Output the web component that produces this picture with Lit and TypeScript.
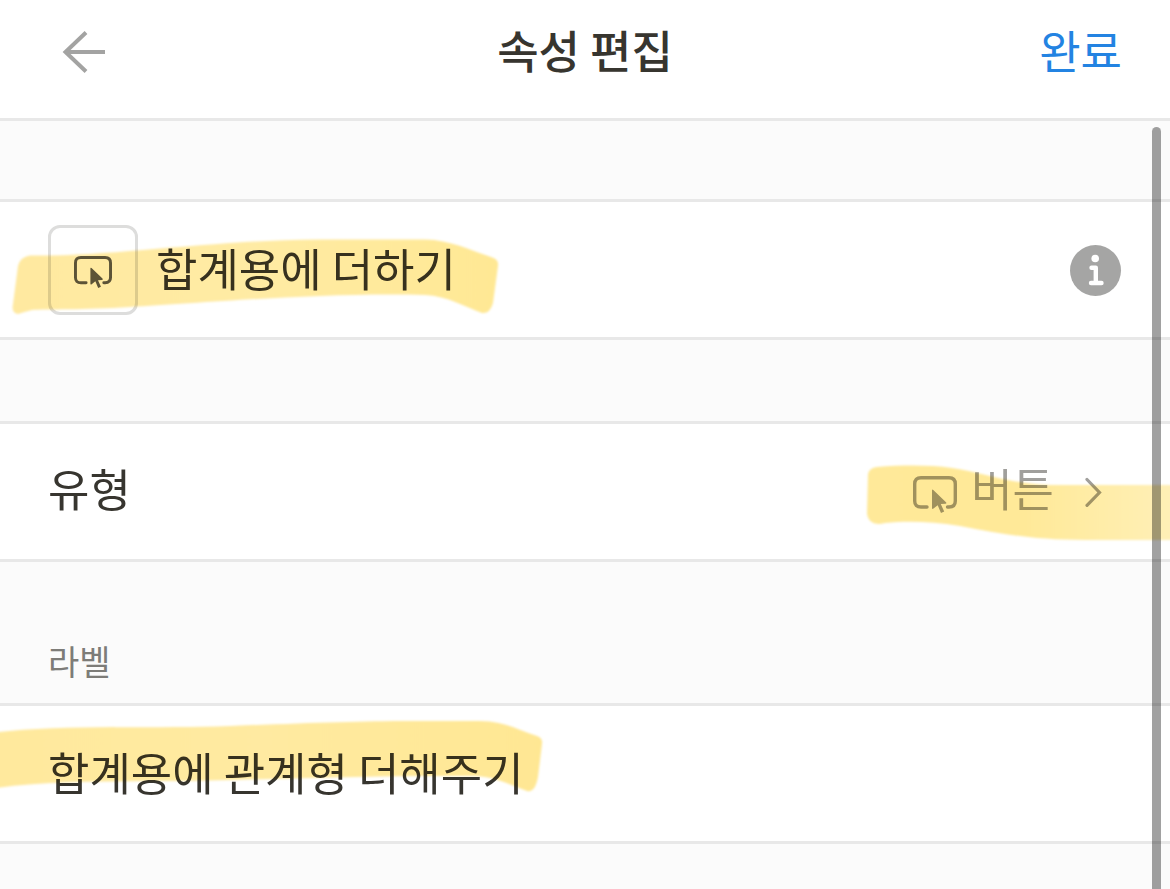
import { LitElement, html, css, svg } from "lit";
import { customElement, property, state } from "lit/decorators.js";

/** Rounded rectangle with a pointer: the icon of the button property type. */
@customElement("button-type-icon")
class ButtonTypeIcon extends LitElement {
  static styles = css`
    :host {
      display: block;
    }
    .glyph {
      display: block;
      width: 100%;
      height: auto;
    }
  `;
  render() {
    return html`<svg class="glyph" viewBox="0 0 44 38" fill="none" aria-hidden="true">
      <path
        d="M14 31H8Q1.700 31 1.700 25V8Q1.700 1.700 8 1.700H36Q42.300 1.700 42.300 8V25Q42.300 31 36 31H34.500"
        stroke="currentColor"
        stroke-width="3.4"
        stroke-linecap="round"
      />
      <path
        d="M19 14.500Q19 12.800 20.300 14L33 26.200Q34 27.600 32.500 27.700L27.800 28L31.200 35.600L28 37L24.700 29.300L20.500 32.600Q19 33.500 19 32Z"
        fill="currentColor"
      />
    </svg>`;
  }
}

type StrokeShape = { box: string; d: string; fade: [string, string, string] };

const strokes: Record<string, StrokeShape> = {
  name: {
    box: "10 235 492 85",
    d: "M18 266Q20 257 30 255.500C110 257 210 240 320 239.500H425C450 240 470 250 491 257Q499 259 498 266L493 303Q490 314 482 313C465 307 448 296 425 295C330 292 200 303 130 307C85 310 45 309 32 310Q24 312 18 314Q11 313 13 304Z",
    fade: ["#ffe9a0", "#ffeba4", "#ffe894"],
  },
  type: {
    box: "864 460 306 85",
    d: "M868 474Q869 468 877 467C905 465 930 465 952 468C985 473 1010 484 1050 485L1180 485V540H1085C1035 540 1000 534 960 526C930 521 905 521 885 523Q869 527 867 514Z",
    fade: ["#ffe999", "#ffe998", "#fff0b8"],
  },
  label: {
    box: "0 715 548 85",
    d: "M-10 733C60 724 160 729 230 726C310 723 360 721 410 721H480C505 721 520 731 537 736Q543 738 542 744L538 777Q535 793 527 791C510 785 497 777 475 776C340 775 220 782 150 781C90 782 40 781 -10 789Z",
    fade: ["#ffe99d", "#ffeaa1", "#ffe793"],
  },
};

/** One highlighter stroke, blended over the row below it. */
@customElement("marker-stroke")
class MarkerStroke extends LitElement {
  static styles = css`
    :host {
      display: block;
    }
    .ink {
      display: block;
      width: 100%;
    }
  `;
  @property() shape = "name";

  render() {
    const { box, d, fade } = strokes[this.shape];
    return html`<svg class="ink" viewBox=${box} aria-hidden="true">
      <defs>
        <linearGradient id="tint">
          ${fade.map((c, i) => svg`<stop offset=${i / 2} stop-color=${c} />`)}
        </linearGradient>
        <filter id="soft" x="-5%" y="-10%" width="110%" height="120%">
          <feGaussianBlur stdDeviation="1.3" />
        </filter>
      </defs>
      <path d=${d} fill="url(#tint)" filter="url(#soft)" />
    </svg>`;
  }
}

@customElement("app-root")
class AppRoot extends LitElement {
  static styles = css`
    :host {
      --text: #37352f;
      --muted: #a09f9c;
      --line: #e8e8e8;
      display: block;
      position: relative;
      box-sizing: border-box;
      min-height: 100vh;
      background: #fbfbfb;
      color: var(--text);
      font-family: "Noto Sans CJK KR", sans-serif;
      font-size: 45px;
      line-height: 64px;
    }
    * {
      box-sizing: border-box;
    }
    button,
    input {
      margin: 0;
      padding: 0;
      border: 0;
      background: none;
      color: inherit;
      font: inherit;
    }
    button {
      cursor: pointer;
    }
    .header {
      display: grid;
      grid-template-columns: 1fr auto 1fr;
      align-items: center;
      padding: 18px 48px 36px;
      border-bottom: 3px solid var(--line);
      background: #fff;
    }
    .title {
      margin: 0;
      font-size: 45px;
      line-height: 64px;
      font-weight: 500;
    }
    .back {
      justify-self: start;
      padding: 4px 0 0 14px;
      color: #a3a3a2;
    }
    .back-icon {
      display: block;
      width: 44px;
      height: 44px;
    }
    .done {
      justify-self: end;
      color: #2383e2;
    }
    .form {
      display: grid;
      gap: 81px;
      padding-top: 78px;
    }
    .row {
      position: relative;
      isolation: isolate;
      display: flex;
      align-items: center;
      gap: 18px;
      min-height: 141px;
      padding: 0 48px;
      border: solid var(--line);
      border-width: 3px 0;
      background: #fff;
    }
    .field {
      flex: 1;
      min-width: 0;
      height: 72px;
      padding-bottom: 4px;
      outline: none;
    }
    .icon-box {
      display: grid;
      place-items: center;
      width: 90px;
      height: 90px;
      padding-top: 6px;
      border: 3px solid #dddddc;
      border-radius: 12px;
      color: #5c5a55;
    }
    .icon-small {
      width: 38px;
    }
    .info-icon {
      display: block;
      width: 52px;
      height: 52px;
    }
    .type-name {
      flex: 1;
      padding-bottom: 8px;
    }
    .type-value {
      display: flex;
      align-items: center;
      gap: 14px;
      padding-right: 20px;
      color: var(--muted);
    }
    .type-text {
      padding-bottom: 8px;
    }
    .icon-large {
      width: 44px;
      padding-top: 6px;
    }
    .chevron {
      width: 18px;
      height: 30px;
      margin-left: 16px;
    }
    .section {
      display: grid;
    }
    .section-label {
      padding: 0 48px 24px;
      color: #7d7c78;
      font-size: 34px;
      line-height: 36px;
    }
    .mark {
      position: absolute;
      pointer-events: none;
      mix-blend-mode: multiply;
    }
    .mark-name {
      left: 10px;
      top: 33px;
      width: 492px;
    }
    .mark-type {
      right: 0;
      top: 36px;
      width: 306px;
    }
    .mark-label {
      left: 0;
      top: 9px;
      width: 548px;
    }
    .scroll-thumb {
      position: absolute;
      top: 127px;
      right: 9px;
      bottom: 0;
      width: 9px;
      border-radius: 5px 5px 0 0;
      background: rgba(0, 0, 0, 0.37);
      pointer-events: none;
    }
  `;

  @state() private name = "합계용에 더하기";
  @state() private label = "합계용에 관계형 더해주기";

  render() {
    return html`
      <header class="header">
        <button class="back" type="button" aria-label="뒤로">
          <svg class="back-icon" viewBox="0 0 44 44" fill="none" stroke="currentColor" stroke-width="4" aria-hidden="true">
            <path d="M43 22H4M24 2.500L3.500 22L24 41.500" />
          </svg>
        </button>
        <h1 class="title">속성 편집</h1>
        <button class="done" type="button">완료</button>
      </header>

      <main class="form">
        <div class="row">
          <button class="icon-box" type="button" aria-label="아이콘">
            <button-type-icon class="icon-small"></button-type-icon>
          </button>
          <input
            class="field"
            type="text"
            aria-label="속성 이름"
            .value=${this.name}
            @input=${(e: Event) => (this.name = (e.target as HTMLInputElement).value)}
          />
          <button type="button" aria-label="정보">
            <svg class="info-icon" viewBox="0 0 52 52" aria-hidden="true">
              <circle cx="25.500" cy="26.500" r="25.500" fill="#a5a5a4" />
              <circle cx="25.200" cy="14.500" r="3.800" fill="#fff" />
              <path d="M21.500 23.800H25.800V39M21 39H31.500" fill="none" stroke="#fff" stroke-width="4.400" stroke-linecap="round" stroke-linejoin="round" />
            </svg>
          </button>
          <marker-stroke class="mark mark-name" shape="name"></marker-stroke>
        </div>

        <div class="row">
          <span class="type-name" id="type-name">유형</span>
          <button class="type-value" type="button" aria-labelledby="type-name type-value">
            <button-type-icon class="icon-large"></button-type-icon>
            <span class="type-text" id="type-value">버튼</span>
            <svg class="chevron" viewBox="0 0 18 30" fill="none" stroke="currentColor" stroke-width="3.200" stroke-linecap="round" aria-hidden="true">
              <path d="M3 2.500L15.500 15.500L3 28.300" />
            </svg>
          </button>
          <marker-stroke class="mark mark-type" shape="type"></marker-stroke>
        </div>

        <div class="section">
          <label class="section-label" for="label-field">라벨</label>
          <div class="row">
            <input
              class="field"
              id="label-field"
              type="text"
              .value=${this.label}
              @input=${(e: Event) => (this.label = (e.target as HTMLInputElement).value)}
            />
            <marker-stroke class="mark mark-label" shape="label"></marker-stroke>
          </div>
        </div>
      </main>
      <div class="scroll-thumb"></div>
    `;
  }
}
